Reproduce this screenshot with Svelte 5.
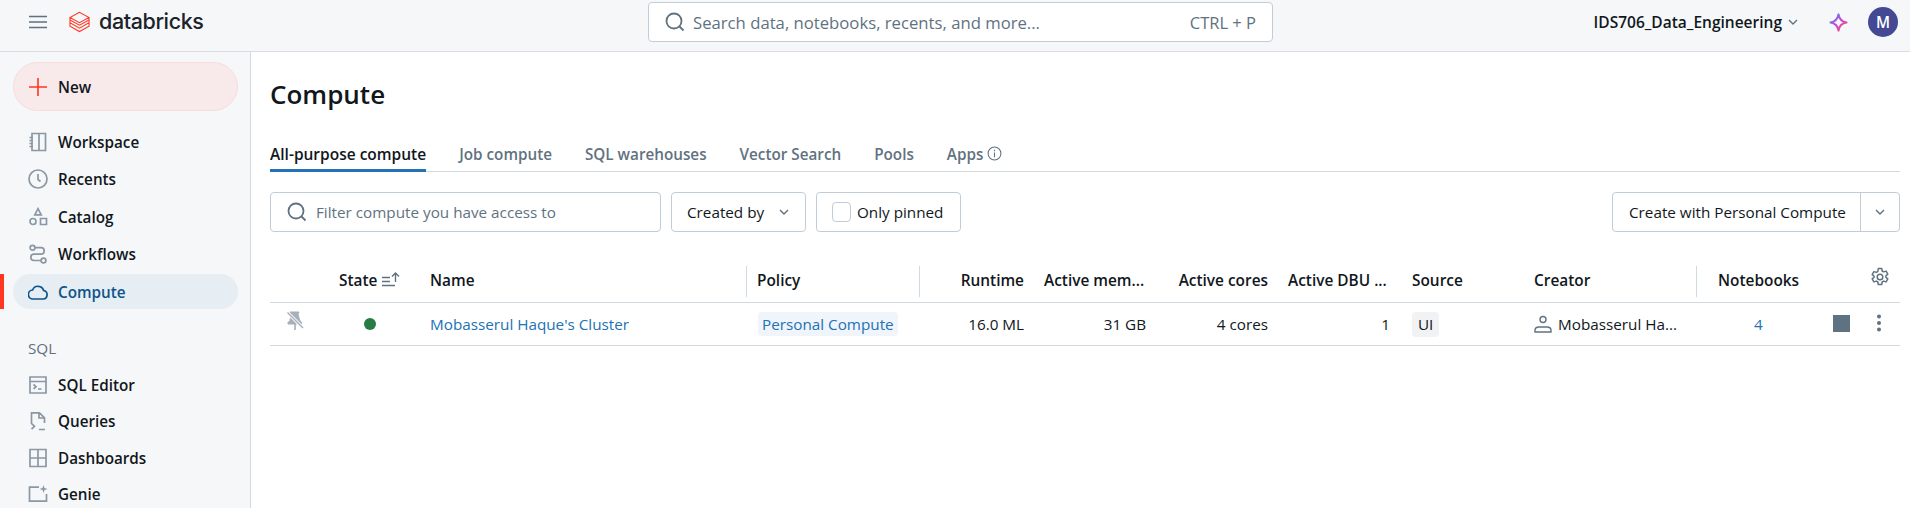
<script>
  const mainNav = [
    { label: "Workspace", icon: "workspace" },
    { label: "Recents", icon: "recents" },
    { label: "Catalog", icon: "catalog" },
    { label: "Workflows", icon: "workflows" },
    { label: "Compute", icon: "compute", active: true }
  ];
  const sqlNav = [
    { label: "SQL Editor", icon: "editor" },
    { label: "Queries", icon: "queries" },
    { label: "Dashboards", icon: "dashboards" },
    { label: "Genie", icon: "genie" }
  ];
  const tabs = ["All-purpose compute", "Job compute", "SQL warehouses", "Vector Search", "Pools", "Apps"];
</script>

{#snippet navIcon(name)}
  <svg class="nav-icon" viewBox="0 0 20 20" fill="none" stroke="currentColor" stroke-width="1.7">
    {#if name === "workspace"}
      <path d="M4 1.500h13.500v17H4z M11 1.500v17 M1.500 5.500H5 M1.500 8.500H5 M1.500 11.500H5 M1.500 14.500H5" />
    {:else if name === "recents"}
      <circle cx="10" cy="10" r="9" /><path d="M10 5V10.500L12.500 12.500" />
    {:else if name === "catalog"}
      <path d="M10 1.700L13.200 7.800H6.800z" /><circle cx="5" cy="14.500" r="3" /><path d="M12.500 11.500h6v6h-6z" />
    {:else if name === "workflows"}
      <circle cx="4.500" cy="3.700" r="2.400" /><circle cx="15.500" cy="16.500" r="2.400" /><path d="M7 3.700h6a3.200 3.200 0 0 1 0 6.400H6a3.100 3.100 0 0 0 0 6.400h7" />
    {:else if name === "compute"}
      <path d="M5.200 17a4.500 4.500 0 0 1-.6-9 5.800 5.800 0 0 1 11 .5 4.300 4.300 0 0 1-.4 8.500z" />
    {:else if name === "editor"}
      <path d="M2 2h16v16H2z M2 6.500h16 M5.500 9.500l2.500 2.200-2.500 2.200 M10 14h3.500" />
    {:else if name === "queries"}
      <path d="M3.500 13V1.800h8l5 5V12 M11 2v5h5.500 M3.500 12.500l3 2.800-3 2.800 M11 18.500h6" />
    {:else if name === "dashboards"}
      <path d="M2 1.500h16v17H2z M2 10h16 M10 1.500v17" />
    {:else if name === "genie"}
      <path d="M11 3.200H1.500v14h17V10" /><path d="M15.500 1l1 3 3 1-3 1-1 3-1-3-3-1 3-1z" fill="currentColor" stroke="none" />
    {/if}
  </svg>
{/snippet}

{#snippet searchIcon()}
  <svg class="search-icon" viewBox="0 0 20 20" fill="none" stroke="currentColor" stroke-width="1.8">
    <circle cx="9" cy="9" r="7.500" /><path d="M14 14l4.500 4.500" />
  </svg>
{/snippet}

{#snippet chevron(cls)}
  <svg class={cls} viewBox="0 0 12 12" fill="none" stroke="currentColor" stroke-width="1.4"><path d="M2 4l4 4 4-4" /></svg>
{/snippet}

<div class="app">
  <header class="topbar">
    <div class="brand">
      <svg class="burger" viewBox="0 0 18 14" fill="none" stroke="currentColor" stroke-width="1.6">
        <path d="M0 1.500h18 M0 7h18 M0 12.500h18" />
      </svg>
      <svg class="logo" viewBox="0 0 22 22" fill="none" stroke="#ff3621" stroke-width="1.100">
        <path d="M11 .8L1 6.300l10 5.500 10-5.500z M1 6.300v2.500l10 5.600 10-5.600V6.300 M1 8.800v3l10 5.600 10-5.600v-3 M1 11.800v3.500l10 5.700 10-5.700v-3.500" />
      </svg>
      <span class="wordmark">databricks</span>
    </div>
    <div class="search">
      {@render searchIcon()}
      <span class="search-text">Search data, notebooks, recents, and more...</span>
      <span class="shortcut">CTRL + P</span>
    </div>
    <div class="account">
      <span class="workspace-name">IDS706_Data_Engineering</span>
      {@render chevron("account-chevron")}
      <svg class="sparkle" viewBox="0 0 20 20" fill="none" stroke-width="2.200">
        <defs>
          <linearGradient id="spark" x1="0" y1="0" x2="1" y2="1">
            <stop offset="0" stop-color="#4299e0" />
            <stop offset="0.5" stop-color="#ca42e0" />
            <stop offset="1" stop-color="#ff5f46" />
          </linearGradient>
        </defs>
        <path d="M10 1.500c.8 5 3.500 7.700 8.500 8.500-5 .8-7.700 3.500-8.500 8.500-.8-5-3.500-7.700-8.500-8.500 5-.8 7.700-3.500 8.500-8.500z" stroke="url(#spark)" stroke-linejoin="round" />
      </svg>
      <span class="avatar">M</span>
    </div>
  </header>

  <div class="body">
    <nav class="sidebar">
      <button class="new-btn">
        <svg class="plus" viewBox="0 0 18 18" stroke="#ff3621" stroke-width="1.600"><path d="M9 0v18 M0 9h18" /></svg>
        New
      </button>
      <div class="nav-group">
        {#each mainNav as item}
          <div class="nav-item" class:active={item.active}>
            {@render navIcon(item.icon)}
            <span>{item.label}</span>
          </div>
        {/each}
      </div>
      <div class="nav-heading">SQL</div>
      <div class="nav-group sql">
        {#each sqlNav as item}
          <div class="nav-item">
            {@render navIcon(item.icon)}
            <span>{item.label}</span>
          </div>
        {/each}
      </div>
    </nav>

    <main class="content">
      <h1>Compute</h1>
      <div class="tabs">
        {#each tabs as tab, i}
          <div class="tab" class:selected={i === 0}>
            {tab}
            {#if tab === "Apps"}
              <svg class="info" viewBox="0 0 14 14" fill="none" stroke="currentColor" stroke-width="1"><circle cx="7" cy="7" r="6" /><path d="M7 6v4.500 M7 3.500v1.300" /></svg>
            {/if}
          </div>
        {/each}
      </div>

      <div class="filters">
        <div class="filter-input">
          {@render searchIcon()}
          <span>Filter compute you have access to</span>
        </div>
        <div class="filter-btn created">Created by {@render chevron("small-chevron")}</div>
        <div class="filter-btn pinned"><span class="checkbox"></span>Only pinned</div>
        <div class="create-group">
          <span class="create-main">Create with Personal Compute</span>
          <span class="create-more">{@render chevron("small-chevron")}</span>
        </div>
      </div>

      <div class="table">
        <div class="row head">
          <div></div>
          <div class="state-head">State
            <svg class="sort" viewBox="0 0 20 16" fill="none" stroke="currentColor" stroke-width="1.400"><path d="M1 5.500h8 M1 9.500h8 M1 13.500h13 M14.500 10V1.500 M11 4.500l3.500-3.500 3.500 3.500" /></svg>
          </div>
          <div class="sep">Name</div>
          <div class="sep">Policy</div>
          <div class="num">Runtime</div>
          <div class="clip">Active mem...</div>
          <div class="num">Active cores</div>
          <div class="clip">Active DBU ...</div>
          <div>Source</div>
          <div class="sep">Creator</div>
          <div class="notebooks-head">Notebooks</div>
          <div class="gear-cell">
            <svg class="gear" viewBox="0 0 20 20" fill="none" stroke="currentColor" stroke-width="1.500">
              <circle cx="10" cy="10" r="2.800" />
              <path d="M8.300 1.500h3.400l.5 2.500 1.500.9 2.400-.8 1.700 3-1.900 1.700v1.400l1.900 1.700-1.700 3-2.400-.8-1.500.9-.5 2.500H8.300l-.5-2.500-1.500-.9-2.400.8-1.700-3 1.900-1.700V9.300L2.200 7.600l1.700-3 2.400.8 1.500-.9z" stroke-linejoin="round" />
            </svg>
          </div>
        </div>
        <div class="row data">
          <div class="pin-cell">
            <svg class="pin" viewBox="0 0 18 20" fill="#a7afb8" stroke="#a7afb8">
              <path d="M4 1h9l-1 2 1.500 6 2 2.500v1.500H2v-1.500L4 9.500 5 3z" /><path d="M9 13v6" stroke-width="1.600" /><path d="M1 1l16 16" stroke="#fff" stroke-width="3.200" /><path d="M1.500 1.500l15.500 15.500" stroke-width="1.400" />
            </svg>
          </div>
          <div class="dot-cell"><span class="dot"></span></div>
          <div class="link">Mobasserul Haque's Cluster</div>
          <div class="policy-cell"><span class="policy-tag">Personal Compute</span></div>
          <div class="num">16.0 ML</div>
          <div class="num mem">31 GB</div>
          <div class="num">4 cores</div>
          <div class="num dbu">1</div>
          <div><span class="ui-tag">UI</span></div>
          <div class="creator">
            <svg class="person" viewBox="0 0 18 18" fill="none" stroke="currentColor" stroke-width="1.400"><circle cx="9" cy="4.500" r="3" /><path d="M1 17v-1.500c0-2.500 2-3.500 4-3.500h8c2 0 4 1 4 3.500V17z" /></svg>
            Mobasserul Ha...
          </div>
          <div class="link notebooks-val">4</div>
          <div class="actions">
            <span class="stop"></span>
            <svg class="kebab" viewBox="0 0 4 18" fill="currentColor"><circle cx="2" cy="2.500" r="2" /><circle cx="2" cy="9" r="2" /><circle cx="2" cy="15.500" r="2" /></svg>
          </div>
        </div>
      </div>
    </main>
  </div>
</div>

<style>
  :global(body) {
    margin: 0;
    background: #fff;
    overflow: hidden;
  }

  .app {
    width: 1910px;
    height: 508px;
    overflow: hidden;
    display: flex;
    flex-direction: column;
    font-family: "Open Sans", "Noto Sans", sans-serif;
    font-size: 15.250px;
    color: #11171c;
  }

  /* top bar */
  .topbar {
    height: 52px;
    box-sizing: border-box;
    padding-bottom: 7px;
    flex: none;
    display: flex;
    align-items: center;
    background: #f6f7f9;
    border-bottom: 1px solid #d8dce1;
  }

  .brand {
    width: 648px;
    display: flex;
    align-items: center;
    padding-left: 29px;
    box-sizing: border-box;
  }

  .burger {
    width: 18px;
    height: 14px;
    color: #5f7281;
    margin-right: 22px;
  }

  .logo {
    width: 21px;
    height: 22px;
    margin-right: 9px;
  }

  .wordmark {
    font-family: Inter, sans-serif;
    font-size: 21.500px;
    font-weight: 500;
    letter-spacing: -0.4px;
    color: #1b2229;
    line-height: 1;
  }

  .search {
    width: 625px;
    height: 40px;
    box-sizing: border-box;
    border: 1px solid #c0cdd8;
    border-radius: 4px;
    background: #fff;
    display: flex;
    align-items: center;
    padding: 0 16px;
    color: #5f7281;
    font-size: 16.500px;
  }

  .search-icon {
    width: 20px;
    height: 20px;
    flex: none;
    color: #5f7281;
  }

  .search-text {
    margin-left: 8px;
    flex: 1;
    font-size: 16.700px;
  }

  .account {
    margin-left: auto;
    display: flex;
    align-items: center;
    padding-right: 12px;
  }

  .workspace-name {
    font-weight: 600;
    font-size: 15.500px;
  }

  .account-chevron {
    width: 12px;
    height: 12px;
    margin-left: 5px;
    color: #5f7281;
  }

  .sparkle {
    width: 19px;
    height: 19px;
    margin-left: 30px;
  }

  .avatar {
    width: 30px;
    height: 30px;
    border-radius: 50%;
    margin-left: 20px;
    background: #434a93;
    color: #fff;
    font-weight: 600;
    display: flex;
    align-items: center;
    justify-content: center;
  }

  .body {
    flex: 1;
    display: flex;
    min-height: 0;
  }

  /* sidebar */
  .sidebar {
    width: 251px;
    flex: none;
    box-sizing: border-box;
    background: #f6f7f9;
    border-right: 1px solid #d1d9e1;
    padding: 10px 12px 0 13px;
  }

  .new-btn {
    width: 225px;
    height: 49px;
    box-sizing: border-box;
    display: flex;
    align-items: center;
    padding: 1px 0 0 15px;
    border: 1px solid #f8dcdc;
    border-radius: 25px;
    background: #f8eaea;
    font: inherit;
    font-weight: 600;
    color: #11171c;
  }

  .plus {
    width: 18px;
    height: 18px;
    margin-right: 11px;
  }

  .nav-group {
    display: flex;
    flex-direction: column;
    gap: 2.500px;
    margin-top: 13px;
  }

  .nav-group.sql {
    gap: 1.500px;
    margin-top: 9px;
  }

  .nav-item {
    height: 35px;
    display: flex;
    align-items: center;
    padding-left: 15px;
    border-radius: 18px;
    font-weight: 600;
    position: relative;
  }

  .nav-item.active {
    background: #e6edf3;
    color: #0e538b;
  }

  .nav-item.active::before {
    content: "";
    position: absolute;
    left: -13px;
    top: 0;
    bottom: 0;
    width: 4px;
    background: #ff3621;
  }

  .nav-icon {
    width: 20px;
    height: 20px;
    margin-right: 10px;
    color: #8a98a5;
    flex: none;
  }

  .active .nav-icon {
    color: #0e538b;
  }

  .nav-heading {
    margin: 29px 0 0 15px;
    color: #5f7281;
    line-height: 20px;
  }

  /* main */
  .content {
    flex: 1;
    min-width: 0;
    padding: 0 10px 0 19px;
  }

  h1 {
    margin: 24px 0 0;
    font-size: 26px;
    line-height: 36px;
    font-weight: 600;
  }

  .tabs {
    display: flex;
    gap: 33px;
    height: 31px;
    margin-top: 28px;
    border-bottom: 1px solid #d1d9e1;
    font-weight: 600;
    color: #5f7281;
  }

  .tab {
    line-height: 28px;
    height: 32px;
    box-sizing: border-box;
    white-space: nowrap;
  }

  .tab.selected {
    font-size: 15.500px;
    color: #11171c;
    border-bottom: 3px solid #2272b4;
  }

  .info {
    width: 15px;
    height: 15px;
    vertical-align: -1px;
  }

  .filters {
    display: flex;
    align-items: center;
    gap: 10px;
    margin-top: 20px;
  }

  .filter-input,
  .filter-btn,
  .create-group {
    height: 40px;
    box-sizing: border-box;
    border: 1px solid #c0cdd8;
    border-radius: 4px;
    display: flex;
    align-items: center;
  }

  .filter-input {
    width: 391px;
    padding-left: 16px;
    color: #5f7281;
  }

  .filter-input span {
    margin-left: 9px;
  }

  .filter-btn {
    padding: 0 10px 0 15px;
  }

  .created {
    width: 135px;
    justify-content: space-between;
    padding-right: 15px;
  }

  .pinned {
    width: 145px;
    padding-left: 15px;
  }

  .small-chevron {
    width: 12px;
    height: 12px;
    color: #5f7281;
  }

  .checkbox {
    width: 19px;
    height: 20px;
    border: 1px solid #c0cdd8;
    border-radius: 4px;
    margin-right: 6px;
    box-sizing: border-box;
    flex: none;
  }

  .create-group {
    margin-left: auto;
  }

  .create-main {
    width: 248px;
    box-sizing: border-box;
    padding-left: 16px;
    white-space: nowrap;
    line-height: 38px;
    border-right: 1px solid #c0cdd8;
  }

  .create-more {
    width: 38px;
    display: flex;
    justify-content: center;
  }

  /* table */
  .table {
    margin-top: 26px;
  }

  .row {
    display: grid;
    grid-template-columns: 60px 90px 327px 173px 114px 134px 110px 124px 122px 173px 100px 1fr;
    align-items: center;
    border-bottom: 1px solid #d1d9e1;
  }

  .row > div {
    padding: 0 10px;
    min-width: 0;
    white-space: nowrap;
  }

  .row.head {
    height: 44px;
    font-size: 15.400px;
    font-weight: 600;
  }

  .row.data {
    height: 42px;
  }

  .sep {
    position: relative;
  }

  .head .sep::after {
    content: "";
    position: absolute;
    right: 0;
    top: -4px;
    bottom: -6px;
    width: 1px;
    background: #d1d9e1;
  }

  .num {
    text-align: right;
  }

  .state-head {
    display: flex;
    align-items: center;
    gap: 4px;
    padding-left: 9px !important;
  }

  .sort {
    width: 20px;
    height: 16px;
    color: #5f7281;
    flex: none;
  }

  .notebooks-head {
    padding-left: 21px !important;
  }

  .gear-cell {
    display: flex;
    justify-content: flex-end;
    padding: 0 10px 0 0 !important;
    margin-top: -7px;
  }

  .gear {
    width: 20px;
    height: 20px;
    color: #5f7281;
  }

  .pin-cell {
    padding-left: 16px !important;
    margin-top: -7px;
  }

  .pin {
    width: 18px;
    height: 20px;
    display: block;
  }

  .dot-cell {
    padding-left: 34px !important;
  }

  .dot {
    display: block;
    width: 12px;
    height: 12px;
    border-radius: 50%;
    background: #277c43;
  }

  .link {
    color: #2272b4;
  }

  .policy-cell {
    padding-left: 11px !important;
  }

  .policy-tag {
    display: inline-block;
    padding: 0 4px;
    line-height: 24px;
    color: #2272b4;
    background: #f0f4fb;
    border-radius: 4px;
  }

  .mem {
    padding-right: 22px !important;
  }

  .dbu {
    padding-right: 12px !important;
  }

  .ui-tag {
    display: inline-block;
    padding: 0 6px;
    line-height: 25px;
    background: #f1f2f4;
    border-radius: 4px;
  }

  .creator {
    display: flex;
    align-items: center;
    gap: 6px;
  }

  .person {
    width: 18px;
    height: 18px;
    color: #5f7281;
    flex: none;
  }

  .notebooks-val {
    padding-left: 57px !important;
  }

  .actions {
    display: flex;
    align-items: center;
    justify-content: flex-end;
    padding: 0 !important;
    margin-top: -2px;
    gap: 27px;
  }

  .stop {
    width: 17px;
    height: 17px;
    background: #5f7281;
  }

  .kebab {
    width: 4px;
    height: 18px;
    color: #5f7281;
    margin-right: 19px;
  }
</style>
